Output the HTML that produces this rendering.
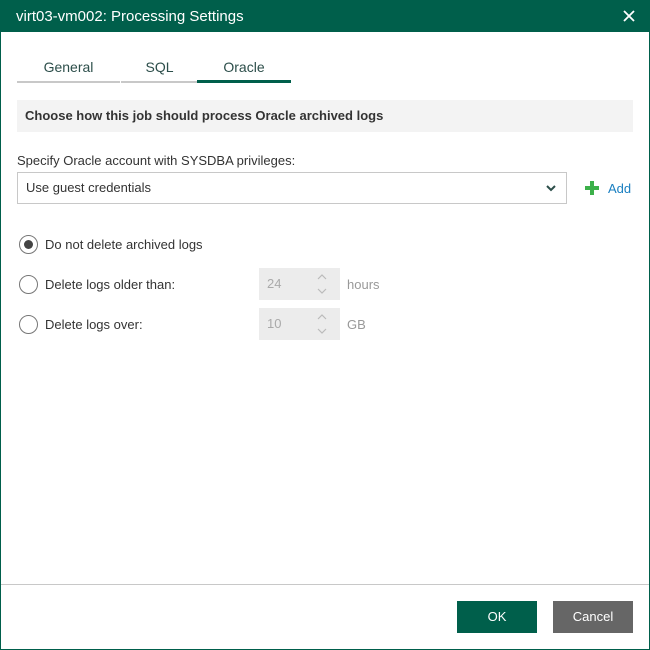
<!DOCTYPE html>
<html><head><style>
body{margin:0;width:650px;height:650px;overflow:hidden;font-family:"Liberation Sans",sans-serif;font-size:13px;color:#333;}
.win{position:absolute;left:0;top:0;width:648px;height:648px;border:1px solid #005f4b;background:#fff;}
.title{position:absolute;left:0;top:0;width:648px;height:31px;background:#005f4b;color:#fff;font-size:15px;line-height:31px;padding-left:15px;box-sizing:border-box;}
.x{position:absolute;right:14px;top:9px;}
.tab{position:absolute;top:58px;font-size:14px;color:#2c4e4a;text-align:center;}
.ul{position:absolute;top:80px;height:2px;background:#c8c8c8;}
.hdr{position:absolute;left:16px;top:99px;width:616px;height:32px;background:#f3f3f3;font-weight:bold;line-height:32px;padding-left:8px;box-sizing:border-box;}
.abs{position:absolute;}
.combo{position:absolute;left:16px;top:171px;width:550px;height:32px;border:1px solid #c8c8c8;box-sizing:border-box;line-height:30px;padding-left:8px;}
.radio{position:absolute;left:18px;width:19px;height:19px;border:1px solid #777;border-radius:50%;box-sizing:border-box;}
.spin{position:absolute;left:258px;width:81px;height:32px;background:#ececec;color:#aaa;line-height:32px;padding-left:8px;box-sizing:border-box;}
.btn{position:absolute;top:600px;width:80px;height:32px;color:#fff;text-align:center;line-height:32px;}
</style></head><body>
<div class="win">
<div class="title">virt03-vm002: Processing Settings
<svg class="x" width="12" height="12" viewBox="0 0 12 12"><path d="M1 1L11 11M11 1L1 11" stroke="#fff" stroke-width="1.8"/></svg></div>
<div class="tab" style="left:16px;width:103px">General</div>
<div class="tab" style="left:120px;width:77px">SQL</div>
<div class="tab" style="left:196px;width:94px">Oracle</div>
<div class="ul" style="left:16px;width:103px"></div>
<div class="ul" style="left:120px;width:77px"></div>
<div class="ul" style="left:196px;width:94px;height:3px;top:79px;background:#005f4b"></div>
<div class="hdr">Choose how this job should process Oracle archived logs</div>
<div class="abs" style="left:16px;top:152px">Specify Oracle account with SYSDBA privileges:</div>
<div class="combo">Use guest credentials
<svg class="abs" style="left:528px;top:11px" width="10" height="8" viewBox="0 0 10 8"><path d="M1 2L5 6L9 2" stroke="#2c4e4a" stroke-width="2" fill="none"/></svg></div>
<svg class="abs" style="left:584px;top:180px" width="14" height="14" viewBox="0 0 14 14"><path d="M7 0V14M0 7H14" stroke="#3cb04a" stroke-width="4"/></svg>
<div class="abs" style="left:607px;top:180px;color:#1a7fc1">Add</div>
<div class="radio" style="top:234px"><div style="position:absolute;left:4px;top:4px;width:9px;height:9px;border-radius:50%;background:#444"></div></div>
<div class="abs" style="left:44px;top:236px">Do not delete archived logs</div>
<div class="radio" style="top:274px"></div>
<div class="abs" style="left:44px;top:276px">Delete logs older than:</div>
<div class="radio" style="top:314px"></div>
<div class="abs" style="left:44px;top:316px">Delete logs over:</div>
<div class="spin" style="top:267px">24<svg class="abs" style="left:58px;top:5px" width="10" height="22" viewBox="0 0 10 22"><path d="M1 6L5 2L9 6M1 16L5 20L9 16" stroke="#bbb" stroke-width="1.2" fill="none"/></svg></div>
<div class="spin" style="top:307px">10<svg class="abs" style="left:58px;top:5px" width="10" height="22" viewBox="0 0 10 22"><path d="M1 6L5 2L9 6M1 16L5 20L9 16" stroke="#bbb" stroke-width="1.2" fill="none"/></svg></div>
<div class="abs" style="left:346px;top:276px;color:#999">hours</div>
<div class="abs" style="left:346px;top:316px;color:#999">GB</div>
<div class="abs" style="left:0;top:583px;width:648px;height:1px;background:#c8c8c8"></div>
<div class="btn" style="left:456px;background:#005f4b">OK</div>
<div class="btn" style="left:552px;background:#666">Cancel</div>
</div>
</body></html>
